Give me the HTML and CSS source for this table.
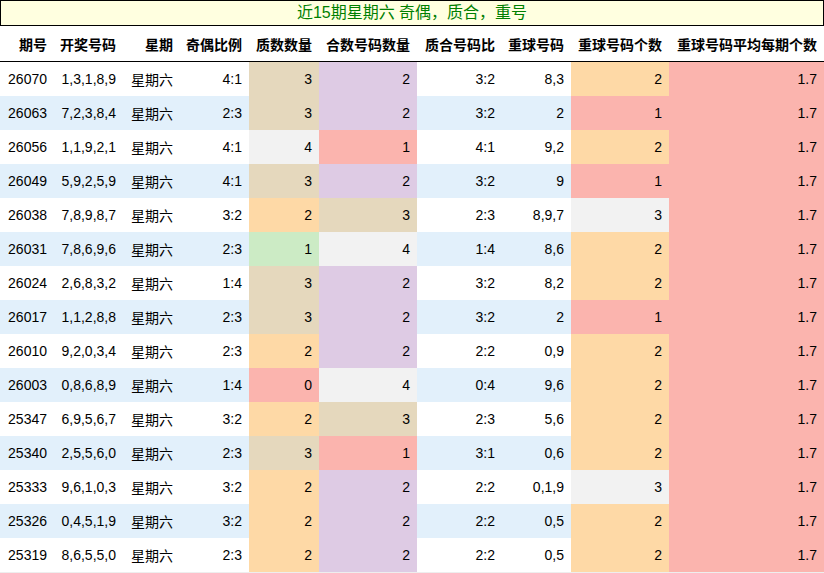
FILE: index.html
```html
<!DOCTYPE html>
<html lang="zh">
<head>
<meta charset="utf-8">
<title>近15期星期六 奇偶，质合，重号</title>
<link rel="stylesheet" href="styles.css">
</head>
<body>
<div class="title">近15期星期六 奇偶，质合，重号</div>
<table class="grid">
<colgroup>
<col class="c1"><col class="c2"><col class="c3"><col class="c4"><col class="c5"><col class="c6"><col class="c7"><col class="c8"><col class="c9"><col class="c10">
</colgroup>
<thead>
<tr><th>期号</th><th>开奖号码</th><th>星期</th><th>奇偶比例</th><th>质数数量</th><th>合数号码数量</th><th>质合号码比</th><th>重球号码</th><th>重球号码个数</th><th>重球号码平均每期个数</th></tr>
</thead>
<tbody>
<tr><td>26070</td><td>1,3,1,8,9</td><td>星期六</td><td>4:1</td><td class="tan">3</td><td class="pur">2</td><td>3:2</td><td>8,3</td><td class="org">2</td><td class="pnk">1.7</td></tr>
<tr><td>26063</td><td>7,2,3,8,4</td><td>星期六</td><td>2:3</td><td class="tan">3</td><td class="pur">2</td><td>3:2</td><td>2</td><td class="pnk">1</td><td class="pnk">1.7</td></tr>
<tr><td>26056</td><td>1,1,9,2,1</td><td>星期六</td><td>4:1</td><td class="gry">4</td><td class="pnk">1</td><td>4:1</td><td>9,2</td><td class="org">2</td><td class="pnk">1.7</td></tr>
<tr><td>26049</td><td>5,9,2,5,9</td><td>星期六</td><td>4:1</td><td class="tan">3</td><td class="pur">2</td><td>3:2</td><td>9</td><td class="pnk">1</td><td class="pnk">1.7</td></tr>
<tr><td>26038</td><td>7,8,9,8,7</td><td>星期六</td><td>3:2</td><td class="org">2</td><td class="tan">3</td><td>2:3</td><td>8,9,7</td><td class="gry">3</td><td class="pnk">1.7</td></tr>
<tr><td>26031</td><td>7,8,6,9,6</td><td>星期六</td><td>2:3</td><td class="grn">1</td><td class="gry">4</td><td>1:4</td><td>8,6</td><td class="org">2</td><td class="pnk">1.7</td></tr>
<tr><td>26024</td><td>2,6,8,3,2</td><td>星期六</td><td>1:4</td><td class="tan">3</td><td class="pur">2</td><td>3:2</td><td>8,2</td><td class="org">2</td><td class="pnk">1.7</td></tr>
<tr><td>26017</td><td>1,1,2,8,8</td><td>星期六</td><td>2:3</td><td class="tan">3</td><td class="pur">2</td><td>3:2</td><td>2</td><td class="pnk">1</td><td class="pnk">1.7</td></tr>
<tr><td>26010</td><td>9,2,0,3,4</td><td>星期六</td><td>2:3</td><td class="org">2</td><td class="pur">2</td><td>2:2</td><td>0,9</td><td class="org">2</td><td class="pnk">1.7</td></tr>
<tr><td>26003</td><td>0,8,6,8,9</td><td>星期六</td><td>1:4</td><td class="pnk">0</td><td class="gry">4</td><td>0:4</td><td>9,6</td><td class="org">2</td><td class="pnk">1.7</td></tr>
<tr><td>25347</td><td>6,9,5,6,7</td><td>星期六</td><td>3:2</td><td class="org">2</td><td class="tan">3</td><td>2:3</td><td>5,6</td><td class="org">2</td><td class="pnk">1.7</td></tr>
<tr><td>25340</td><td>2,5,5,6,0</td><td>星期六</td><td>2:3</td><td class="tan">3</td><td class="pnk">1</td><td>3:1</td><td>0,6</td><td class="org">2</td><td class="pnk">1.7</td></tr>
<tr><td>25333</td><td>9,6,1,0,3</td><td>星期六</td><td>3:2</td><td class="org">2</td><td class="pur">2</td><td>2:2</td><td>0,1,9</td><td class="gry">3</td><td class="pnk">1.7</td></tr>
<tr><td>25326</td><td>0,4,5,1,9</td><td>星期六</td><td>3:2</td><td class="org">2</td><td class="pur">2</td><td>2:2</td><td>0,5</td><td class="org">2</td><td class="pnk">1.7</td></tr>
<tr><td>25319</td><td>8,6,5,5,0</td><td>星期六</td><td>2:3</td><td class="org">2</td><td class="pur">2</td><td>2:2</td><td>0,5</td><td class="org">2</td><td class="pnk">1.7</td></tr>
</tbody>
</table>
</body>
</html>
```
FILE: styles.css
```css
html, body {
  margin: 0;
  padding: 0;
  background: #ffffff;
}
body {
  width: 824px;
  font-family: "Liberation Sans", "Noto Sans CJK SC", sans-serif;
  font-size: 14px;
  color: #000;
}
.title {
  height: 24px;
  line-height: 24px;
  border: 1px solid #000;
  background: #ffffe0;
  color: #008000;
  font-size: 16px;
  text-align: center;
}
.grid {
  width: 824px;
  border-collapse: collapse;
  table-layout: fixed;
}
.c1 { width: 54px; }
.c2 { width: 69px; }
.c3 { width: 57px; }
.c4 { width: 69px; }
.c5 { width: 70px; }
.c6 { width: 98px; }
.c7 { width: 85px; }
.c8 { width: 69px; }
.c9 { width: 98px; }
.c10 { width: 155px; }
.grid th {
  height: 35px;
  padding: 0 7px 0 0;
  text-align: right;
  font-weight: bold;
  border-bottom: 1px solid #000;
  white-space: nowrap;
}
.grid td {
  height: 34px;
  padding: 0 7px 0 0;
  text-align: right;
  white-space: nowrap;
}
.grid tbody tr:nth-child(even) {
  background: #e2f0fb;
}
.grid tbody tr:last-child td {
  border-bottom: 1px solid #eeeeee;
}
.grid td.pnk { background: #fbb4ae; }
.grid td.grn { background: #ccebc5; }
.grid td.pur { background: #decbe4; }
.grid td.org { background: #fed9a6; }
.grid td.tan { background: #e5d8bd; }
.grid td.gry { background: #f2f2f2; }
```
